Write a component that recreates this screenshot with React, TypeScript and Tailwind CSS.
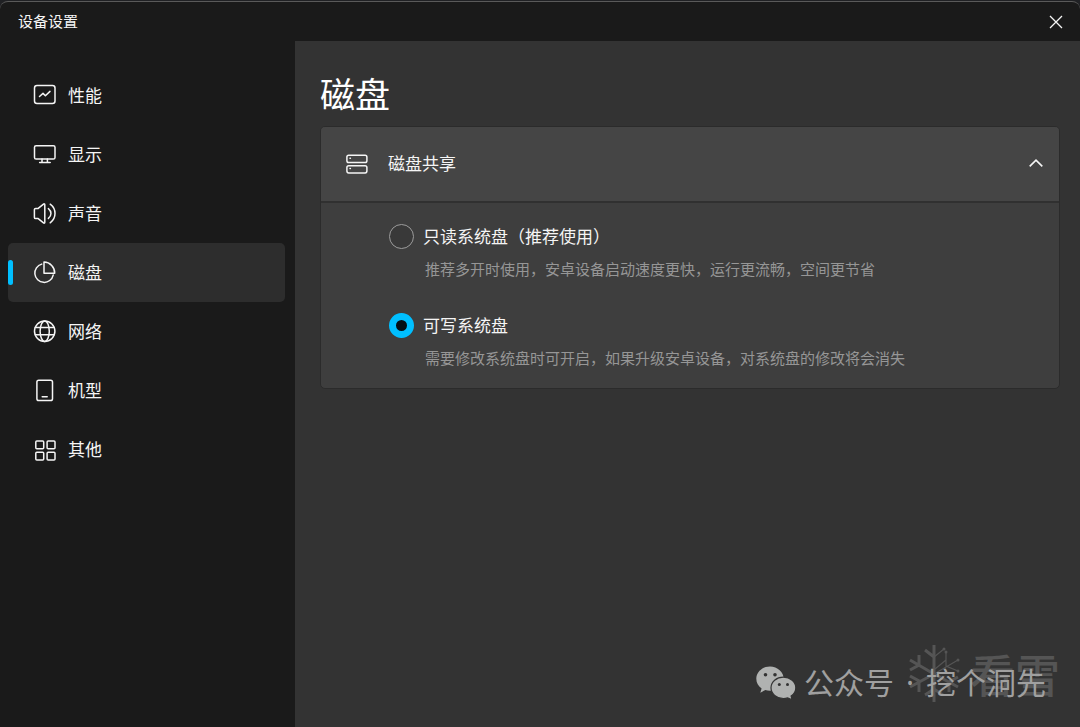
import { useState } from 'react'
import type { ReactNode } from 'react'
import clsx from 'clsx'

interface IconProps {
  children: ReactNode
}

function Icon({ children }: IconProps) {
  return (
    <svg
      viewBox="0 0 23 23"
      className="size-[23px] shrink-0"
      fill="none"
      stroke="currentColor"
      strokeWidth="1.5"
      strokeLinecap="round"
      strokeLinejoin="round"
      aria-hidden="true"
    >
      {children}
    </svg>
  )
}

const navItems = [
  {
    id: 'performance',
    label: '性能',
    icon: (
      <Icon>
        <rect x="1.5" y="1.5" width="20.5" height="18" rx="2.5" />
        <path d="M6.5 12.5 10 9.4l2.4 2.4 4.6-4.4" />
      </Icon>
    ),
  },
  {
    id: 'display',
    label: '显示',
    icon: (
      <Icon>
        <rect x="1.5" y="2.7" width="20.5" height="13.4" rx="1.6" />
        <path d="M9 16.1v3.5M14.4 16.1v3.5M6.6 19.6h10.6" />
      </Icon>
    ),
  },
  {
    id: 'sound',
    label: '声音',
    icon: (
      <Icon>
        <path d="M1.4 7.6c0-.7.5-1.2 1.2-1.2h2.6l5.3-4.3c.6-.5 1.3-.2 1.3.6v17.6c0 .8-.7 1.1-1.3.6l-5.3-4.3H2.6c-.7 0-1.2-.5-1.2-1.2z" />
        <path d="M15.4 6.6c3.4 2.8 3.4 7 0 9.8M17.2 2.2c6.4 4.8 6.4 13.8 0 18.6" />
      </Icon>
    ),
  },
  {
    id: 'disk',
    label: '磁盘',
    icon: (
      <Icon>
        <path d="M8.7 3.1a9.3 9.3 0 1 0 11.5 11" />
        <path d="M11 1.1v11.1h10.7A10.8 10.8 0 0 0 11 1.1z" />
      </Icon>
    ),
  },
  {
    id: 'network',
    label: '网络',
    icon: (
      <Icon>
        <circle cx="11.7" cy="11.2" r="10.2" />
        <ellipse cx="11.7" cy="11.2" rx="4.6" ry="10.2" />
        <path d="M2.3 7.6h18.8M2.3 14.8h18.8" />
      </Icon>
    ),
  },
  {
    id: 'model',
    label: '机型',
    icon: (
      <Icon>
        <rect x="3.9" y="1.2" width="15.6" height="20.4" rx="1.8" />
        <path d="M9.2 17.8h5" />
      </Icon>
    ),
  },
  {
    id: 'other',
    label: '其他',
    icon: (
      <Icon>
        <rect x="2.8" y="2.9" width="7.9" height="7.9" rx="1" />
        <rect x="14.1" y="2.9" width="7.9" height="7.9" rx="1" />
        <rect x="2.8" y="14.2" width="7.9" height="7.9" rx="1" />
        <rect x="14.1" y="14.2" width="7.9" height="7.9" rx="1" />
      </Icon>
    ),
  },
]

const diskModes = [
  {
    id: 'readonly',
    label: '只读系统盘（推荐使用）',
    hint: '推荐多开时使用，安卓设备启动速度更快，运行更流畅，空间更节省',
  },
  {
    id: 'writable',
    label: '可写系统盘',
    hint: '需要修改系统盘时可开启，如果升级安卓设备，对系统盘的修改将会消失',
  },
]

function TitleBar() {
  return (
    <header className="flex h-10 items-center justify-between rounded-t-lg border-t border-[#5a5a5a] bg-[#1a1a1a] pr-3 pl-[18px]">
      <span className="pb-0.5 text-[15px] leading-6">设备设置</span>
      <button type="button" aria-label="关闭" className="flex size-6 items-center justify-center">
        <svg viewBox="0 0 14 14" className="size-3.5" stroke="currentColor" strokeWidth="1.3" aria-hidden="true">
          <path d="M1 1l12 12M13 1 1 13" />
        </svg>
      </button>
    </header>
  )
}

interface SidebarProps {
  active: string
  onSelect: (id: string) => void
}

function Sidebar({ active, onSelect }: SidebarProps) {
  return (
    <nav className="w-[295px] shrink-0 bg-[#1a1a1a] pt-[25px] pr-2.5 pl-2">
      {navItems.map((item) => (
        <button
          key={item.id}
          type="button"
          onClick={() => onSelect(item.id)}
          className={clsx(
            'relative flex h-[59px] w-full items-center gap-3 rounded-[5px] pl-[25px] text-[17px] leading-6',
            item.id === active && 'bg-[#2d2d2d]',
          )}
        >
          {item.id === active && (
            <span className="absolute top-[17px] left-0 h-[25px] w-[5px] rounded-full bg-[#00bfff]" />
          )}
          {item.icon}
          <span className="pb-0.5">{item.label}</span>
        </button>
      ))}
    </nav>
  )
}

function DiskSharing() {
  const [open, setOpen] = useState(true)
  const [mode, setMode] = useState('writable')

  return (
    <section className="overflow-hidden rounded-[5px] border border-[#2b2b2b] bg-[#3e3e3e]">
      <button
        type="button"
        aria-expanded={open}
        onClick={() => setOpen(!open)}
        className="flex h-[76px] w-full items-center gap-5 border-b-2 border-[#303030] bg-[#454545] pr-4 pl-6 text-[17px] leading-6"
      >
        <Icon>
          <rect x="1.9" y="2.3" width="20" height="7.2" rx="1.8" />
          <rect x="1.9" y="12.7" width="20" height="7.2" rx="1.8" />
          <path d="M5 5.2h.4M5 15.6h.4" />
        </Icon>
        <span className="pb-0.5">磁盘共享</span>
        <svg
          viewBox="0 0 14 14"
          className={clsx('ml-auto size-3.5', !open && 'rotate-180')}
          fill="none"
          stroke="currentColor"
          strokeWidth="1.6"
          aria-hidden="true"
        >
          <path d="M.7 9.4 7 3.1l6.3 6.3" />
        </svg>
      </button>
      {open && (
        <div className="flex flex-col gap-[31px] pt-5 pr-6 pb-[18px] pl-[68px]">
          {diskModes.map((item) => (
            <div key={item.id}>
              <label className="flex h-[26px] items-center gap-[9px] text-[17px] leading-6">
                <input
                  type="radio"
                  name="disk-mode"
                  checked={mode === item.id}
                  onChange={() => setMode(item.id)}
                  aria-describedby={`${item.id}-hint`}
                  className="size-[25px] shrink-0 appearance-none rounded-full border border-[#9c9c9c] bg-[#393939] checked:border-[7px] checked:border-[#00bfff] checked:bg-[#040e14]"
                />
                {item.label}
              </label>
              <p id={`${item.id}-hint`} className="mt-2 pl-9 text-[15px] leading-6 text-[#969696]">
                {item.hint}
              </p>
            </div>
          ))}
        </div>
      )}
    </section>
  )
}

function Snowflake() {
  return (
    <svg
      viewBox="0 0 52 58"
      className="h-[58px] w-[52px]"
      fill="none"
      stroke="currentColor"
      strokeWidth="3"
      aria-hidden="true"
    >
      <path d="M26 0v57M17 5l9 7M2 15l24 14M11 10v10L2 25M26 29 2 42M2 31l9 5v11M17 50l9-6 9 6M26 29l24 13M41 47V37l9-5" />
      <path strokeWidth="1.2" d="m26 12 10-8M26 29l24-14M38 7v14l12 5M27 24l11-9" />
      <g fill="currentColor" stroke="none">
        <circle cx="36" cy="4" r="1.5" />
        <circle cx="38" cy="7" r="1.5" />
        <circle cx="50" cy="15" r="1.5" />
        <circle cx="50" cy="26" r="1.5" />
      </g>
    </svg>
  )
}

function WeChatLogo() {
  return (
    <svg viewBox="0 0 40 34" className="h-[34px] w-10" aria-hidden="true">
      <path
        fill="#b0b2b1"
        d="M14 .4C6.4.4.3 5.9.3 12.8c0 4 2 7.4 5.3 9.7l-1.3 4.2 5-2.6c1.5.4 3 .7 4.7.7 7.6 0 13.7-5.4 13.7-12.1S21.6.4 14 .4z"
      />
      <path
        fill="#b0b2b1"
        stroke="#333"
        strokeWidth="1.2"
        d="M27.4 11.2c-6.9 0-12.4 4.7-12.4 10.6s5.5 10.7 12.4 10.7c1.5 0 2.9-.2 4.2-.6l4.6 2-1.1-3.8c2.9-1.9 4.7-4.9 4.7-8.3 0-5.9-5.500-10.6-12.4-10.6z"
      />
      <g fill="#333">
        <circle cx="9.5" cy="8.8" r="1.8" />
        <circle cx="19" cy="8.8" r="1.8" />
        <circle cx="23.3" cy="18.5" r="1.5" />
        <circle cx="31.5" cy="18.5" r="1.5" />
      </g>
    </svg>
  )
}

function Watermark() {
  return (
    <div className="pointer-events-none absolute right-5 bottom-6 grid items-center justify-items-end">
      <div className="col-start-1 row-start-1 flex items-center gap-2.5 text-[#555] select-none">
        <Snowflake />
        <span className="text-[45px] leading-[58px] font-medium">看雪</span>
      </div>
      <div className="col-start-1 row-start-1 flex items-center gap-2 pt-[18px] pr-3.5 text-[#a0a0a0] select-none">
        <WeChatLogo />
        <div className="flex gap-3 font-['Noto_Sans','Noto_Sans_CJK_SC',sans-serif] text-[30px] leading-9 whitespace-nowrap">
          <span>公众号</span>
          <span>·</span>
          <span>挖个洞先</span>
        </div>
      </div>
    </div>
  )
}

export default function App() {
  const [active, setActive] = useState('disk')
  const current = navItems.find((item) => item.id === active)

  return (
    <div className="relative flex min-h-screen flex-col bg-[#202124] pt-px font-['Noto_Sans_CJK_SC',sans-serif] text-[#f5f5f5]">
      <TitleBar />
      <div className="flex grow bg-[#333]">
        <Sidebar active={active} onSelect={setActive} />
        <main className="min-w-0 grow pt-7 pr-5 pl-[25px]">
          <h1 className="mb-[9px] text-[35px] leading-12 text-white">{current?.label}</h1>
          {active === 'disk' && <DiskSharing />}
        </main>
      </div>
      <Watermark />
    </div>
  )
}
